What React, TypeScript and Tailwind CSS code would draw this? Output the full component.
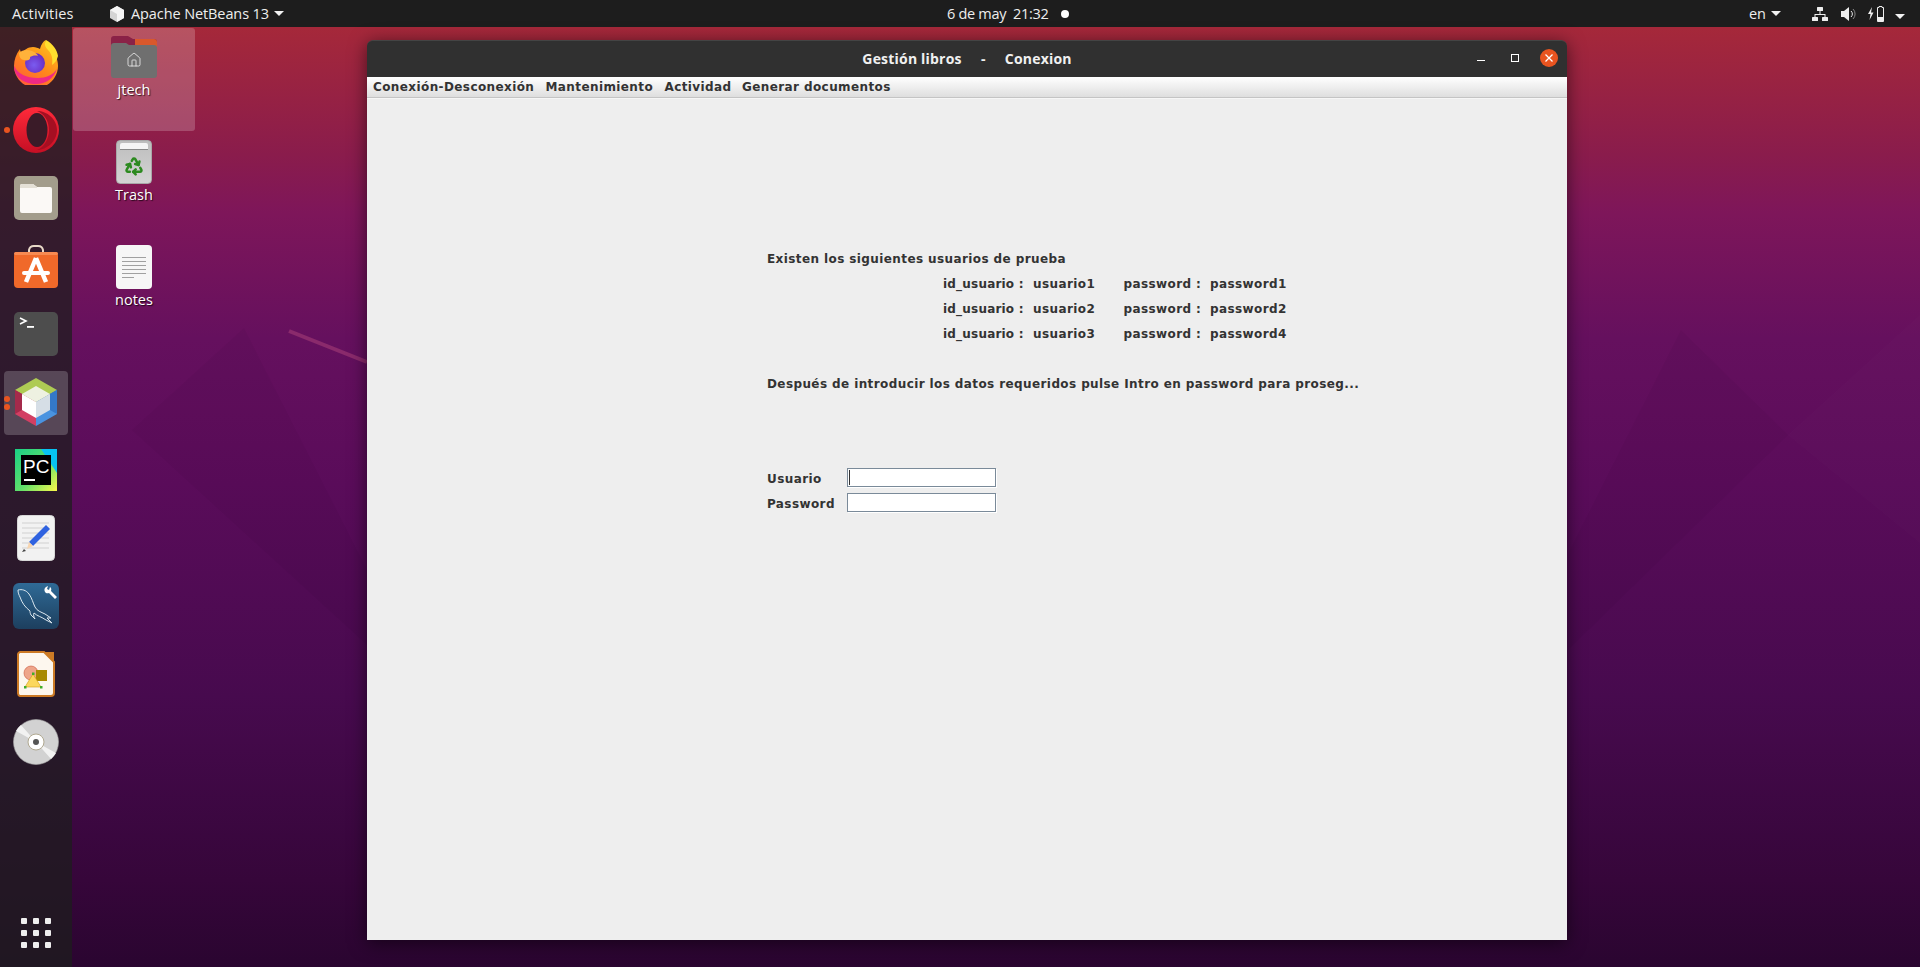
import React from 'react';
import { Recycle, House } from 'lucide-react';

const Caret = () => <span className="ml-[5px] w-0 h-0 border-x-[5px] border-x-transparent border-t-[5px] border-t-[#f2f2f2] inline-block" />;

const Firefox = () => (
  <svg width="46" height="46" viewBox="0 0 46 46">
    <defs>
      <linearGradient id="ff" x1="0.8" y1="0" x2="0.2" y2="1"><stop offset="0" stopColor="#ffc21f" /><stop offset="0.5" stopColor="#ff8a1a" /><stop offset="1" stopColor="#ff5a3a" /></linearGradient>
      <radialGradient id="fg" cx="0.45" cy="0.6" r="0.6"><stop offset="0" stopColor="#7a5cf0" /><stop offset="1" stopColor="#6a2bc0" /></radialGradient>
    </defs>
    <path d="M1 27C1 21 3 15 7 10c0 2 1 3 2 4 2-3 6-6 11-6 3 0 5 1 7 2 1-3 2-7 6-9-1 4 1 6 4 9 5 4 8 10 8 17 0 12-10 22-22 22S1 39 1 27z" fill="url(#ff)" />
    <path d="M33 1c-2 4-1 7 2 10 4 4 5 9 4 15 3-2 5-5 6-9C44 11 40 5 33 1z" fill="#ffdf2e" />
    <circle cx="22" cy="24" r="10" fill="url(#fg)" />
    <path d="M6 14c3-3 8-4 13-2 3 1 5 3 6 5-3-1-6 0-8 1 1 3-3 4-6 3-3 0-5-3-5-7z" fill="#ffb23a" />
    <path d="M1 27c0 11 10 18 22 18 10 0 18-6 21-15-4 6-11 9-19 9C13 39 5 35 1 27z" fill="#ef2a84" />
  </svg>
);

const Opera = () => (
  <svg width="46" height="46" viewBox="0 0 46 46">
    <defs><linearGradient id="op" x1="0" y1="0" x2="0" y2="1"><stop offset="0" stopColor="#ff2a3a" /><stop offset="1" stopColor="#c50f24" /></linearGradient></defs>
    <circle cx="23" cy="23" r="23" fill="url(#op)" />
    <path d="M24 4c10 0 20 8 20 19s-10 20-20 20c6-2 12-10 12-20S30 6 24 4z" fill="#a50f22" />
    <ellipse cx="24" cy="23" rx="10.5" ry="17" fill="#3a1b28" />
  </svg>
);

const FilesIcon = () => (
  <svg width="44" height="44" viewBox="0 0 44 44">
    <rect width="44" height="44" rx="5" fill="#a39d8c" />
    <path d="M6 10a2 2 0 0 1 2-2h11l4 3h13a2 2 0 0 1 2 2v22a2 2 0 0 1-2 2H8a2 2 0 0 1-2-2z" fill="#fbf9f6" />
    <path d="M6 10a2 2 0 0 1 2-2h11l4 3v1H6z" fill="#e4e0d6" />
  </svg>
);

const AppStore = () => (
  <svg width="44" height="46" viewBox="0 0 44 46">
    <path d="M15 12V7a5 5 0 0 1 5-4h4a5 5 0 0 1 5 4v5" fill="none" stroke="#e8d9c8" strokeWidth="2" />
    <rect y="9" width="44" height="36" rx="4" fill="#f0692a" />
    <rect y="9" width="44" height="3" rx="1.5" fill="#f78a52" />
    <path d="M22 15l-10 24M22 15l10 24" stroke="#fff" strokeWidth="4.5" fill="none" />
    <rect x="8" y="28" width="28" height="4" rx="2" fill="#fff" />
  </svg>
);

const Terminal = () => (
  <svg width="44" height="44" viewBox="0 0 44 44">
    <rect width="44" height="44" rx="5" fill="#4d4d4d" />
    <path d="M6 6l6 3-6 3" stroke="#fff" strokeWidth="1.6" fill="none" />
    <rect x="13" y="14" width="7" height="1.8" fill="#fff" />
  </svg>
);

const NetBeans = () => (
  <svg width="42" height="48" viewBox="0 0 42 48">
    <path d="M21 0L42 12 21 24 0 12z" fill="#aecb54" />
    <path d="M0 12l21 12v24L0 36z" fill="#d23f63" />
    <path d="M0 12l7 4v16l-7 4z" fill="#a42a4b" />
    <path d="M42 12L21 24v24l21-12z" fill="#4a93e0" />
    <path d="M42 12l-7 4v16l7 4z" fill="#3478c8" />
    <path d="M21 8l14 8-14 8-14-8z" fill="#eef1e1" />
    <path d="M7 16l14 8v16L7 32z" fill="#fff" />
    <path d="M35 16L21 24v16l14-8z" fill="#d6dee6" />
  </svg>
);

const PyCharm = () => (
  <svg width="42" height="42" viewBox="0 0 42 42">
    <defs><linearGradient id="pc" x1="0" y1="0" x2="1" y2="1"><stop offset="0" stopColor="#19cf86" /><stop offset="0.55" stopColor="#5fe06a" /><stop offset="1" stopColor="#fcf84a" /></linearGradient></defs>
    <rect width="42" height="42" fill="url(#pc)" />
    <path d="M26 0h16v24z" fill="#07c3f2" />
    <rect x="6" y="6" width="30" height="30" fill="#000" />
    <rect x="9" y="30" width="11" height="2" fill="#fff" />
    <text x="8" y="24" fill="#fff" fontSize="19" fontWeight="400" fontFamily="'Liberation Sans', sans-serif">PC</text>
  </svg>
);

const Writer = () => (
  <svg width="38" height="46" viewBox="0 0 38 46">
    <rect x="0.5" y="0.5" width="37" height="45" rx="4" fill="#f2f2f2" stroke="#d8d8d8" />
    <path d="M5 8h27M5 13h27M5 18h27M5 23h27M5 28h27M5 33h27" stroke="#d0d0d0" strokeWidth="1" />
    <path d="M29 10l4 4-17 17-4-4z" fill="#2f62e0" />
    <path d="M12 27l4 4-6 3z" fill="#f7d5b0" />
    <path d="M5 37l2-3 2 2z" fill="#444" />
  </svg>
);

const Workbench = () => (
  <svg width="46" height="46" viewBox="0 0 46 46">
    <defs><linearGradient id="wb" x1="0" y1="0" x2="0" y2="1"><stop offset="0" stopColor="#2f6a96" /><stop offset="1" stopColor="#1d3f5e" /></linearGradient></defs>
    <rect width="46" height="46" rx="6" fill="url(#wb)" />
    <path d="M5 7c4-1 8 0 11 4 3 4 4 9 6 13 2 4 6 5 10 7l6 4-4 0 5 5-6-3c-4-3-9-4-12-7-1 2 0 4 1 6l-4-4c-1-2-1-3-1-4-5-4-8-8-10-14-1-2-2-4-2-7z" fill="none" stroke="#dce8f0" strokeWidth="1" />
    <path d="M33 4a4 4 0 0 0-1 5l1 1a4 4 0 0 0 3 0l6 6 2-2-6-6a4 4 0 0 0 0-3l-1-1-1 3-2-1 1-3z" fill="#fff" />
  </svg>
);

const Draw = () => (
  <svg width="38" height="46" viewBox="0 0 38 46">
    <path d="M3 1h24l10 10v31a3 3 0 0 1-3 3H3a3 3 0 0 1-2-3V3a3 3 0 0 1 2-2z" fill="#fdf7ee" stroke="#cc7a25" strokeWidth="2" />
    <path d="M27 1h10v10z" fill="#cc7a25" />
    <circle cx="14" cy="22" r="7" fill="#eea58a" stroke="#c9573c" strokeWidth="0.6" />
    <rect x="19" y="19" width="11" height="11" fill="#a88a00" />
    <path d="M16 23l8 13H8z" fill="#fbd75d" stroke="#d19a10" strokeWidth="0.6" />
    <rect x="15" y="21.5" width="2.5" height="2.5" fill="#3fae28" />
    <rect x="7" y="35" width="2.5" height="2.5" fill="#3fae28" />
    <rect x="23" y="35" width="2.5" height="2.5" fill="#3fae28" />
  </svg>
);

const Disc = () => (
  <svg width="46" height="46" viewBox="0 0 46 46">
    <circle cx="23" cy="23" r="22.5" fill="#d2d2d2" stroke="#aaa" strokeWidth="0.6" />
    <path d="M3 12L23 23 8 6a22 22 0 0 0-5 6zM43 34L23 23l15 17a22 22 0 0 0 5-6z" fill="#f2f2f2" />
    <circle cx="23" cy="23" r="8" fill="#fff" stroke="#b0a890" />
    <circle cx="23" cy="23" r="3" fill="#555" />
  </svg>
);

const Dock = () => {
  const icons = [<Firefox />, <Opera />, <FilesIcon />, <AppStore />, <Terminal />, <NetBeans />, <PyCharm />, <Writer />, <Workbench />, <Draw />, <Disc />];
  return (
    <div className="w-[72px] shrink-0 bg-[#1d1d1d]/75 pt-px flex flex-col">
      {icons.map((icon, i) => (
        <div key={i} className="relative h-[68px] flex items-center justify-center">
          {i === 5 && <div className="absolute inset-x-1 top-[3px] h-[64px] rounded bg-white/20" />}
          <div className="relative flex">{icon}</div>
          {i === 1 && <span className="absolute left-1 top-[31px] size-[6px] rounded-full bg-[#e95420]" />}
          {i === 5 && (
            <>
              <span className="absolute left-1 top-[28px] size-[6px] rounded-full bg-[#e95420]" />
              <span className="absolute left-1 top-[36px] size-[6px] rounded-full bg-[#e95420]" />
            </>
          )}
        </div>
      ))}
      <div className="mt-auto h-[68px] flex items-center justify-center">
        <div className="grid grid-cols-3 gap-[6px]">
          {Array.from({ length: 9 }).map((_, i) => <span key={i} className="size-[6px] rounded-[1px] bg-[#eeeeee]" />)}
        </div>
      </div>
    </div>
  );
};

const DesktopIcon = ({ label, active, children }: { label: string; active?: boolean; children: React.ReactNode }) => (
  <div className={`h-[103px] rounded-[3px] pt-[7px] flex flex-col items-center ${active ? 'bg-white/20' : ''}`}>
    <div className="h-[44px] flex items-center justify-center">{children}</div>
    <span className="mt-[1px] text-[14.5px] leading-[20px] text-white [text-shadow:1px_1px_1px_rgba(0,0,0,0.7)]">{label}</span>
  </div>
);

const Field = ({ label, caret }: { label: string; caret?: boolean }) => (
  <div className="flex items-center h-[25px]">
    <span className="w-[80px]">{label}</span>
    <div className="w-[149px] h-[19px] mb-[2px] bg-white border border-[#7a8a99] pl-px flex items-center shadow-[1px_1px_0_#fff]">
      {caret && <span className="w-px h-[15px] bg-[#333]" />}
    </div>
  </div>
);

const UserRow = ({ n, pw }: { n: string; pw: string }) => (
  <div className="flex h-[25px] items-center pl-[176px]">
    <span className="w-[90px] tracking-[0.2px]">id_usuario :</span>
    <span className="w-[90.5px]">{n}</span>
    <span className="w-[86.5px]">password :</span>
    <span>{pw}</span>
  </div>
);

const AppWindow = () => (
  <div className="ml-[172px] mt-[13px] w-[1200px] h-[900px] flex flex-col rounded-t-[6px] shadow-[0_3px_18px_rgba(0,0,0,0.55)]">
    <div className="relative h-[37px] rounded-t-[6px] bg-[#303030] border-t border-[#444] flex items-center justify-center">
      <span className="text-[14px] font-bold text-[#f0f0f0] whitespace-pre tracking-[0.2px] pb-[2px]">{'Gestión libros     -     Conexion'}</span>
      <div className="absolute right-[9px] top-[8px] flex items-center">
        <span className="w-2 h-px bg-white mt-[5px] mr-[26px]" />
        <span className="size-[8px] border border-white mr-[21px]" />
        <span className="size-[18px] rounded-full bg-[#e95420] flex items-center justify-center">
          <svg width="8" height="8" viewBox="0 0 8 8"><path d="M0.5 0.5l7 7M7.5 0.5l-7 7" stroke="#fff" strokeWidth="1.3" /></svg>
        </span>
      </div>
    </div>
    <div className="h-[21px] bg-[linear-gradient(#ffffff,#dedede)] border-b border-[#c4c4c4] flex items-center pl-[6px] text-[12px] font-bold tracking-[0.4px] text-[#333] font-['DejaVu_Sans',sans-serif]">
      <span className="w-[172.5px]">Conexión-Desconexión</span>
      <span className="w-[119px]">Mantenimiento</span>
      <span className="w-[77.5px]">Actividad</span>
      <span>Generar documentos</span>
    </div>
    <div className="flex-1 bg-[#eeeeee] border-t border-[#f6f6f6] pl-[400px] pt-[147px] text-[12px] font-bold tracking-[0.4px] text-[#333] font-['DejaVu_Sans',sans-serif]">
      <div className="h-[25px] flex items-center">Existen los siguientes usuarios de prueba</div>
      <UserRow n="usuario1" pw="password1" />
      <UserRow n="usuario2" pw="password2" />
      <UserRow n="usuario3" pw="password4" />
      <div className="h-[25px]" />
      <div className="h-[25px] flex items-center">Después de introducir los datos requeridos pulse Intro en password para proseg...</div>
      <div className="h-[70px]" />
      <Field label="Usuario" caret />
      <Field label="Password" />
    </div>
  </div>
);

const TopBar = () => (
  <div className="relative h-[27px] shrink-0 bg-[#1d1d1d] flex items-center text-[14.5px] text-[#eeeeee]">
    <span className="ml-3 w-[98px] tracking-[0.2px]">Activities</span>
    <svg width="14" height="16" viewBox="0 0 14 16" className="mr-[7px]">
      <path d="M7 0l7 4v8l-7 4-7-4V4z" fill="#d4d4d4" />
      <path d="M7 8L0 4l7-4 7 4zM7 8v8l7-4V4z" fill="#f4f4f4" />
    </svg>
    <span className="tracking-[-0.1px]">Apache NetBeans 13</span>
    <Caret />
    <div className="absolute left-[947px] flex items-center whitespace-pre">
      <span className="tracking-[-0.3px]">{'6 de may  21:32'}</span>
      <span className="ml-[12px] size-2 rounded-full bg-white" />
    </div>
    <div className="ml-auto flex items-center pr-[15px]">
      <span>en</span>
      <Caret />
      <svg width="16" height="14" viewBox="0 0 16 14" className="ml-[31px]" fill="#eee">
        <rect x="5" y="0" width="6" height="4" rx="0.5" />
        <rect x="0" y="10" width="6" height="4" rx="0.5" />
        <rect x="10" y="10" width="6" height="4" rx="0.5" />
        <path d="M7.5 4h1v3h5v3h-1V8h-9v2h-1V7h5z" />
      </svg>
      <svg width="15" height="14" viewBox="0 0 15 14" className="ml-[13px]">
        <path d="M0 4h3l5-4v14l-5-4H0z" fill="#eee" />
        <path d="M10 4a4 4 0 0 1 0 6" stroke="#eee" fill="none" />
        <path d="M12 2a7 7 0 0 1 0 10" stroke="#888" fill="none" />
      </svg>
      <svg width="16" height="16" viewBox="0 0 16 16" className="ml-[12px]">
        <path d="M4 1L0 8h2.5L1.5 14 5.5 6.5H3z" fill="#eee" />
        <path d="M9.5 1.5h1.5V0.5h3v1h1.5v14h-6z" fill="none" stroke="#eee" />
        <rect x="10" y="11" width="5" height="4" fill="#eee" />
      </svg>
      <span className="ml-[6px]"><Caret /></span>
    </div>
  </div>
);

export default function App() {
  return (
    <div className="relative h-[967px] w-[1920px] overflow-hidden flex flex-col font-['Open_Sans',sans-serif] bg-[linear-gradient(180deg,#a5283a_3%,#8a1c4c_16%,#7e165a_22%,#65105e_35%,#5a0c5a_50%,#470a4e_72%,#36063a_91%,#2a0530_100%)]">
      {/* wallpaper facets */}
      <svg className="absolute inset-0 pointer-events-none" width="1920" height="967" viewBox="0 0 1920 967">
        <path d="M289 331L367 362" stroke="#8a2a6c" strokeWidth="4" />
        <path d="M244 328L132 430 367 645V570z" fill="#000" opacity="0.03" />
        <path d="M1681 330L1568 554V650L1788 435z" fill="#000" opacity="0.03" />
        <path d="M1920 315L1788 435 1920 543z" fill="#fff" opacity="0.012" />
      </svg>
      <TopBar />
      <div className="relative flex flex-1 min-h-0">
        <Dock />
        <div className="w-[122px] ml-px pt-px flex flex-col gap-[2px] shrink-0">
          <DesktopIcon label="jtech" active>
            <svg width="46" height="42" viewBox="0 0 46 42">
              <path d="M0 3a3 3 0 0 1 3-3h14l5 3h21a3 3 0 0 1 3 3v8H0z" fill="#8a2247" />
              <path d="M24 3h19a3 3 0 0 1 3 3v6H24z" fill="#d9582c" />
              <path d="M0 10a3 3 0 0 1 3-3h12l3 2h25a3 3 0 0 1 3 3v27a3 3 0 0 1-3 3H3a3 3 0 0 1-3-3z" fill="#6f6f6f" />
              <foreignObject x="15" y="16" width="16" height="16"><House size={16} color="#f2f2f2" strokeWidth={1.2} /></foreignObject>
            </svg>
          </DesktopIcon>
          <DesktopIcon label="Trash">
            <div className="relative w-9 h-[44px] rounded-[4px] bg-[linear-gradient(#bdbdbd,#d4d4d4)] border border-[#a8a8a8] flex items-center justify-center">
              <span className="absolute top-[2px] inset-x-[3px] h-[7px] rounded-t-[2px] bg-[#f4f4f4] border-b border-[#888]" />
              <Recycle size={20} color="#2c8a1f" strokeWidth={3} className="mt-[7px]" />
            </div>
          </DesktopIcon>
          <DesktopIcon label="notes">
            <div className="w-9 h-[44px] rounded-[4px] bg-[#f6f6f6] flex flex-col gap-[3px] pt-3 px-[6px]">
              {[0, 1, 2, 3, 4].map(i => <span key={i} className="h-px bg-[#a0a0a0]" />)}
              <span className="h-px w-3 bg-[#a0a0a0]" />
            </div>
          </DesktopIcon>
        </div>
        <AppWindow />
      </div>
    </div>
  );
}
